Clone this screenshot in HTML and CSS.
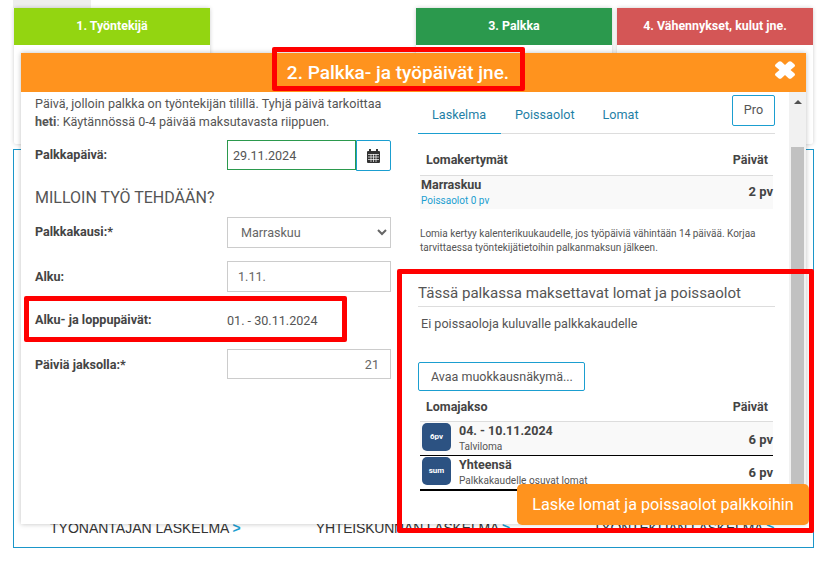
FILE: index.html
```html
<!DOCTYPE html>
<html lang="fi">
<head>
    <meta charset="UTF-8">
    <title>Palkka- ja työpäivät</title>
    <link rel="stylesheet" href="styles.css">
</head>
<body>
    <div class="top-stub"></div>
    <div class="steps">
        <div class="step"><div class="step-head green-light">1. Työntekijä</div></div>
        <div class="step step-empty"></div>
        <div class="step"><div class="step-head green">3. Palkka</div></div>
        <div class="step"><div class="step-head red">4. Vähennykset, kulut jne.</div></div>
    </div>

    <div class="result-box">
        <div class="result-link link-a">TYÖNANTAJAN LASKELMA <b>&gt;</b></div>
        <div class="result-link link-b">YHTEISKUNNAN LASKELMA <b>&gt;</b></div>
        <div class="result-link link-c">TYÖNTEKIJÄN LASKELMA <b>&gt;</b></div>
    </div>

    <div class="modal">
        <div class="modal-head">
            <div class="modal-title">2. Palkka- ja työpäivät jne.</div>
            <svg class="modal-close" viewBox="2 0.5 16 17" width="20" height="18" preserveAspectRatio="none">
                <path d="M2.5 3.5 L4.8 1.2 Q6 0.2 7.2 1.2 L10 4.2 L12.8 1.2 Q14 0.2 15.2 1.2 L17.5 3.5 Q18.5 4.8 17.5 6 L14.4 9 L17.5 12 Q18.5 13.2 17.5 14.5 L15.2 16.8 Q14 17.8 12.8 16.8 L10 13.8 L7.2 16.8 Q6 17.8 4.8 16.8 L2.5 14.5 Q1.5 13.2 2.5 12 L5.6 9 L2.5 6 Q1.5 4.8 2.5 3.5 Z" fill="#fff"/>
            </svg>
        </div>
        <div class="modal-body">
            <div class="col-left">
                <p class="intro">Päivä, jolloin palkka on työntekijän tilillä. Tyhjä päivä tarkoittaa <b>heti</b>: Käytännössä 0-4 päivää maksutavasta riippuen.</p>
                <div class="form-row row-date">
                    <label>Palkkapäivä:</label>
                    <div class="date-group">
                        <input class="date-input" type="text" value="29.11.2024">
                        <div class="date-btn">
                            <svg viewBox="0 0 13 14" width="13" height="14">
                                <path d="M2 0h2v2h5V0h2v2h1a1 1 0 0 1 1 1v10a1 1 0 0 1-1 1H1a1 1 0 0 1-1-1V3a1 1 0 0 1 1-1h1z" fill="#333"/>
                                <path d="M1 5.5h11M1 8h11M1 10.5h11M4 5v8M6.5 5v8M9 5v8" stroke="#fff" stroke-width="0.7"/>
                            </svg>
                        </div>
                    </div>
                </div>
                <h3 class="form-title">MILLOIN TYÖ TEHDÄÄN?</h3>
                <div class="form-row row-period">
                    <label>Palkkakausi:*</label>
                    <select class="field field-select"><option>Marraskuu</option></select>
                </div>
                <div class="form-row row-start">
                    <label>Alku:</label>
                    <input class="field field-start" type="text" value="1.11.">
                </div>
                <div class="form-row row-dates">
                    <label>Alku- ja loppupäivät:</label>
                    <span class="plain-value">01. - 30.11.2024</span>
                </div>
                <div class="form-row row-days">
                    <label>Päiviä jaksolla:*</label>
                    <input class="field field-num" type="text" value="21">
                </div>
            </div>

            <div class="col-right">
                <div class="tabs">
                    <a class="tab active">Laskelma</a>
                    <a class="tab">Poissaolot</a>
                    <a class="tab">Lomat</a>
                    <div class="pro-btn">Pro</div>
                </div>

                <div class="table-head head-accrual"><span>Lomakertymät</span><span>Päivät</span></div>
                <div class="accrual-row">
                    <div class="accrual-text">
                        <div class="accrual-name">Marraskuu</div>
                        <div class="accrual-sub">Poissaolot 0 pv</div>
                    </div>
                    <div class="days">2 pv</div>
                </div>
                <p class="note">Lomia kertyy kalenterikuukaudelle, jos työpäiviä vähintään 14 päivää. Korjaa tarvittaessa työntekijätietoihin palkanmaksun jälkeen.</p>

                <h4 class="section-title">Tässä palkassa maksettavat lomat ja poissaolot</h4>
                <p class="no-absence">Ei poissaoloja kuluvalle palkkakaudelle</p>
                <div class="edit-btn">Avaa muokkausnäkymä...</div>

                <div class="table-head head-leave"><span>Lomajakso</span><span>Päivät</span></div>
                <div class="leave-row first">
                    <div class="badge">6pv</div>
                    <div class="leave-text">
                        <div class="leave-name">04. - 10.11.2024</div>
                        <div class="leave-sub">Talviloma</div>
                    </div>
                    <div class="days">6 pv</div>
                </div>
                <div class="leave-row second">
                    <div class="badge">sum</div>
                    <div class="leave-text">
                        <div class="leave-name">Yhteensä</div>
                        <div class="leave-sub">Palkkakaudelle osuvat lomat</div>
                    </div>
                    <div class="days">6 pv</div>
                </div>
            </div>

            <div class="scrollbar">
                <div class="scroll-arrow"></div>
                <div class="scroll-thumb"></div>
            </div>
        </div>
    </div>

    <div class="calc-btn">Laske lomat ja poissaolot palkkoihin</div>

    <div class="mark mark-title"></div>
    <div class="mark mark-dates"></div>
    <div class="mark mark-leave"></div>
</body>
</html>
```

FILE: styles.css
```css
* {
    box-sizing: border-box;
}
body {
    font-family: Roboto, sans-serif;
    margin: 0;
    padding: 0;
    width: 831px;
    height: 571px;
    overflow: hidden;
    position: relative;
    background-color: #fff;
    color: #444;
    font-size: 12.6px;
}
.top-stub {
    width: 78px;
    height: 8px;
    margin-left: 13px;
    background-color: #eee;
}
.steps {
    display: flex;
    gap: 5px;
    margin-left: 14px;
}
.step {
    width: 196px;
    height: 136px;
    background-color: #fff;
    border-radius: 2px;
    box-shadow: 0 0 4px rgba(0, 0, 0, 0.2);
}
.step-empty {
    visibility: hidden;
}
.step-head {
    height: 37px;
    line-height: 36px;
    text-align: center;
    color: #fff;
    font-weight: 700;
    font-size: 12.4px;
}
.green-light { background-color: #93d511; }
.green { background-color: #2b994d; }
.red { background-color: #d45656; }

.result-box {
    position: relative;
    margin: 5px 0 0 13px;
    width: 801px;
    height: 399px;
    border: 1px solid #1b96c9;
    display: flex;
    align-items: flex-end;
    padding-bottom: 11px;
    padding-left: 36px;
}
.result-link {
    font-family: "Liberation Sans", sans-serif;
    font-size: 14px;
    line-height: 16px;
    color: #333;
    white-space: nowrap;
}
.result-link b {
    color: #1b9ed0;
}
.link-b { margin-left: 75px; letter-spacing: -0.2px; }
.link-c { margin-left: 83px; letter-spacing: -0.2px; }

.modal {
    position: absolute;
    left: 21px;
    top: 53px;
    width: 785px;
    height: 471px;
    background-color: #fff;
    box-shadow: 0 0 5px rgba(0, 0, 0, 0.25);
    display: flex;
    flex-direction: column;
}
.modal-head {
    height: 39px;
    flex: none;
    background-color: #ff931e;
    display: flex;
    justify-content: center;
    align-items: center;
    position: relative;
    padding-right: 31px;
}
.modal-title {
    color: #fff;
    font-size: 19px;
    font-weight: 500;
}
.modal-close {
    position: absolute;
    right: 11px;
    top: 8px;
}
.modal-body {
    display: flex;
    height: 432px;
}

.col-left {
    width: 397px;
    padding: 3px 0 0 14px;
    flex: none;
}
.intro {
    margin: 0;
    line-height: 18px;
    width: 360px;
    color: #555;
}
.form-row {
    display: flex;
    align-items: center;
    width: 356px;
}
.form-row label {
    width: 192px;
    font-weight: 700;
    color: #444;
    padding-bottom: 2px;
}
.row-date { margin-top: 9px; }
.date-group {
    display: flex;
    width: 164px;
}
.date-input {
    width: 129px;
    height: 30px;
    border: 1px solid #2b994d;
    padding: 0 5px;
    font: 12.6px Roboto, sans-serif;
    color: #555;
    outline: none;
}
.date-btn {
    width: 35px;
    height: 31px;
    border: 1px solid #1b9ed0;
    border-radius: 0 2px 2px 0;
    display: flex;
    align-items: center;
    justify-content: center;
}
.form-title {
    margin: 18px 0 0;
    font-size: 16px;
    font-weight: 400;
    line-height: 18px;
    color: #555;
}
.field {
    width: 164px;
    height: 31px;
    border: 1px solid #ccc;
    padding: 0 11px;
    font: 12.6px Roboto, sans-serif;
    color: #666;
    background-color: #fff;
    outline: none;
}
.field-select {
    padding-left: 9px;
}
.field-start {
    padding-left: 10px;
}
.field-num {
    text-align: right;
}
.row-period { margin-top: 10px; }
.row-start { margin-top: 13px; }
.row-dates { margin-top: 13px; height: 31px; }
.row-days { margin-top: 13px; height: 30px; }
.row-days .field { height: 30px; }
.row-start label,
.row-days label {
    padding-bottom: 0;
}
.plain-value {
    color: #555;
}

.col-right {
    width: 372px;
    flex: none;
    overflow: hidden;
    padding-right: 15px;
}
.tabs {
    position: relative;
    display: flex;
    height: 42px;
    border-bottom: 1px solid #ddd;
}
.tab {
    color: #1f7fa6;
    padding: 14px 14px 0;
    height: 42px;
    line-height: 18px;
}
.tab.active {
    border-bottom: 1px solid #1b9ed0;
    width: 83px;
}
.pro-btn {
    position: absolute;
    right: 0;
    top: 3px;
    width: 43px;
    height: 31px;
    border: 1px solid #1b9ed0;
    border-radius: 2px;
    text-align: center;
    line-height: 28px;
    color: #555;
}
.table-head {
    display: flex;
    justify-content: space-between;
    font-weight: 700;
    font-size: 12.5px;
    margin: 0 2px;
    padding: 0 5px 0 6px;
    border-bottom: 1px solid #ddd;
    color: #444;
}
.head-accrual {
    margin-top: 18px;
    height: 24px;
    line-height: 16px;
}
.head-leave {
    margin-top: 8px;
    height: 23px;
    line-height: 16px;
}
.accrual-row {
    display: flex;
    justify-content: space-between;
    align-items: center;
    margin: 0 2px;
    height: 33px;
    background-color: #f9f9f9;
}
.accrual-row .days {
    padding-bottom: 2px;
}
.accrual-name {
    font-weight: 700;
    font-size: 12.5px;
    line-height: 16px;
    margin-left: 1px;
}
.accrual-sub {
    font-size: 10px;
    line-height: 15px;
    color: #1b9ed0;
    margin-left: 1px;
}
.days {
    font-weight: 700;
    font-size: 13px;
    white-space: nowrap;
}
.note {
    margin: 18px 0 0 2px;
    font-size: 10px;
    line-height: 14px;
    color: #555;
    width: 350px;
}
.section-title {
    margin: 28px 0 0;
    font-size: 15.1px;
    font-weight: 400;
    line-height: 20px;
    height: 24px;
    color: #555;
    border-bottom: 1px solid #ddd;
}
.no-absence {
    margin: 8px 0 0 3px;
    line-height: 18px;
    color: #555;
}
.edit-btn {
    margin-top: 29px;
    width: 167px;
    height: 29px;
    border: 1px solid #1b9ed0;
    border-radius: 2px;
    font-size: 12.5px;
    line-height: 28px;
    padding-left: 12px;
    color: #555;
}
.leave-row {
    display: flex;
    margin: 0 2px;
    background-color: #f9f9f9;
    padding: 1px 0 0 2px;
}
.leave-row.first {
    height: 34px;
    border-bottom: 1px solid #000;
}
.leave-row.second {
    height: 35px;
    border-bottom: 2px solid #000;
    background-color: #fff;
}
.leave-row .days {
    align-self: center;
}
.leave-row.second .days {
    padding-bottom: 2px;
}
.badge {
    width: 29px;
    height: 28px;
    flex: none;
    border-radius: 5px;
    background-color: #2c5282;
    color: #fff;
    font-size: 8px;
    font-weight: 700;
    text-align: center;
    line-height: 28px;
}
.leave-text {
    flex: 1;
    margin-left: 8px;
}
.leave-name {
    font-weight: 700;
    font-size: 12.5px;
    line-height: 16px;
}
.leave-sub {
    font-size: 10.1px;
    line-height: 16px;
    color: #555;
}

.scrollbar {
    width: 17px;
    flex: none;
    background-color: #f1f1f1;
    margin-left: -1px;
    display: flex;
    flex-direction: column;
    align-items: center;
    padding-top: 8px;
}
.scroll-arrow {
    width: 0;
    height: 0;
    border-left: 4px solid transparent;
    border-right: 4px solid transparent;
    border-bottom: 4px solid #505050;
}
.scroll-thumb {
    width: 13px;
    flex: 1;
    margin-top: 43px;
    background-color: #c1c1c1;
}

.calc-btn {
    position: absolute;
    left: 517px;
    top: 484px;
    width: 292px;
    height: 41px;
    background-color: #ff931e;
    border-radius: 5px;
    color: #fff;
    font-size: 16.2px;
    line-height: 41px;
    text-align: center;
}
.mark {
    position: absolute;
    border: 5px solid #f00;
    border-radius: 2px;
}
.mark-title {
    left: 272px;
    top: 47px;
    width: 253px;
    height: 44px;
}
.mark-dates {
    left: 24px;
    top: 296px;
    width: 323px;
    height: 46px;
}
.mark-leave {
    left: 397px;
    top: 269px;
    width: 417px;
    height: 264px;
}
```
